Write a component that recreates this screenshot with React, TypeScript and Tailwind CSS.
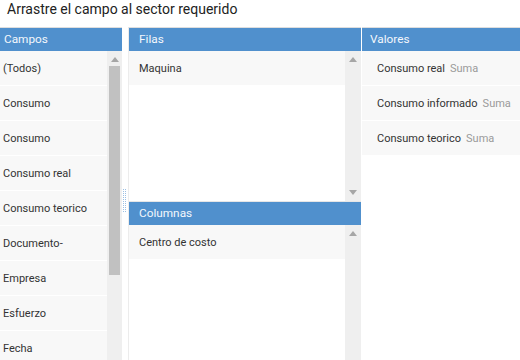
import React from "react";

const campos = [
  "(Todos)",
  "Consumo",
  "Consumo",
  "Consumo real",
  "Consumo teorico",
  "Documento-",
  "Empresa",
  "Esfuerzo",
  "Fecha",
];

const valores = ["Consumo real", "Consumo informado", "Consumo teorico"];

const ArrowUp = () => (
  <svg width="8" height="5" viewBox="0 0 8 5" className="block">
    <polygon points="4,0 8,5 0,5" fill="#a6a6a6" />
  </svg>
);

const ArrowDown = () => (
  <svg width="8" height="5" viewBox="0 0 8 5" className="block">
    <polygon points="0,0 8,0 4,5" fill="#a6a6a6" />
  </svg>
);

const Header = ({ title, pad }: { title: string; pad: string }) => (
  <div className={`h-[23px] shrink-0 bg-[#5090cd] text-[#f3f7fc] text-[11.8px] flex items-center pt-[1px] ${pad}`}>
    {title}
  </div>
);

const Row = ({ children, pad }: { children: React.ReactNode; pad: string }) => (
  <div className={`h-[35px] shrink-0 bg-[#f8f8f8] border-b border-white flex items-center pt-[2px] text-[11px] text-[#333] ${pad}`}>
    {children}
  </div>
);

export default function App() {
  return (
    <div className="w-[520px] h-[360px] bg-white overflow-hidden font-['Roboto',sans-serif]">
      <div className="h-[27px] pl-[7px] text-[14px] leading-[19px] text-[#222]">
        Arrastre el campo al sector requerido
      </div>

      <div className="flex h-[333px]">
        {/* Campos */}
        <div className="w-[122px] flex flex-col border-t border-[#dedede]">
          <Header title="Campos" pad="pl-[4px]" />
          <div className="flex flex-1 overflow-hidden">
            <div className="flex-1 flex flex-col">
              {campos.map((c, i) => (
                <Row key={i} pad="pl-[3px]">
                  {c}
                </Row>
              ))}
            </div>
            <div className="w-[15px] bg-[#efefef] flex flex-col items-center">
              <div className="pt-[6px]">
                <ArrowUp />
              </div>
              <div className="mt-[4px] w-[11px] h-[209px] bg-[#c1c1c1]" />
            </div>
          </div>
        </div>

        {/* splitter */}
        <div className="w-[6px] flex flex-col items-center pt-[162px]">
          <svg width="4" height="24" viewBox="0 0 4 24">
            {Array.from({ length: 12 }).map((_, i) => (
              <g key={i}>
                <rect x="0" y={i * 2} width="1" height="1" fill="#9cc0e4" />
                <rect x="2" y={i * 2} width="1" height="1" fill="#9cc0e4" />
              </g>
            ))}
          </svg>
        </div>

        {/* Filas / Columnas */}
        <div className="w-[233px] flex flex-col border-l border-[#ececec] border-t border-t-[#dedede]">
          <Header title="Filas" pad="pl-[10px]" />
          <div className="h-[150px] flex shrink-0">
            <div className="flex-1 flex flex-col">
              <Row pad="pl-[10px]">Maquina</Row>
            </div>
            <div className="w-[16px] bg-[#efefef] flex flex-col items-center justify-between pt-[6px] pb-[6px]">
              <ArrowUp />
              <ArrowDown />
            </div>
          </div>
          <div className="h-px bg-[#e6e6e6] shrink-0" />
          <Header title="Columnas" pad="pl-[10px]" />
          <div className="flex flex-1">
            <div className="flex-1 flex flex-col">
              <Row pad="pl-[10px]">Centro de costo</Row>
            </div>
            <div className="w-[16px] bg-[#efefef] flex flex-col items-center pt-[6px]">
              <ArrowUp />
            </div>
          </div>
        </div>

        {/* Valores */}
        <div className="flex-1 ml-px flex flex-col border-t border-[#dedede]">
          <Header title="Valores" pad="pl-[8px]" />
          {valores.map((v) => (
            <Row key={v} pad="pl-[15px]">
              <span>{v}</span>
              <span className="ml-[5px] text-[#9a9a9a]">Suma</span>
            </Row>
          ))}
        </div>
      </div>
    </div>
  );
}
